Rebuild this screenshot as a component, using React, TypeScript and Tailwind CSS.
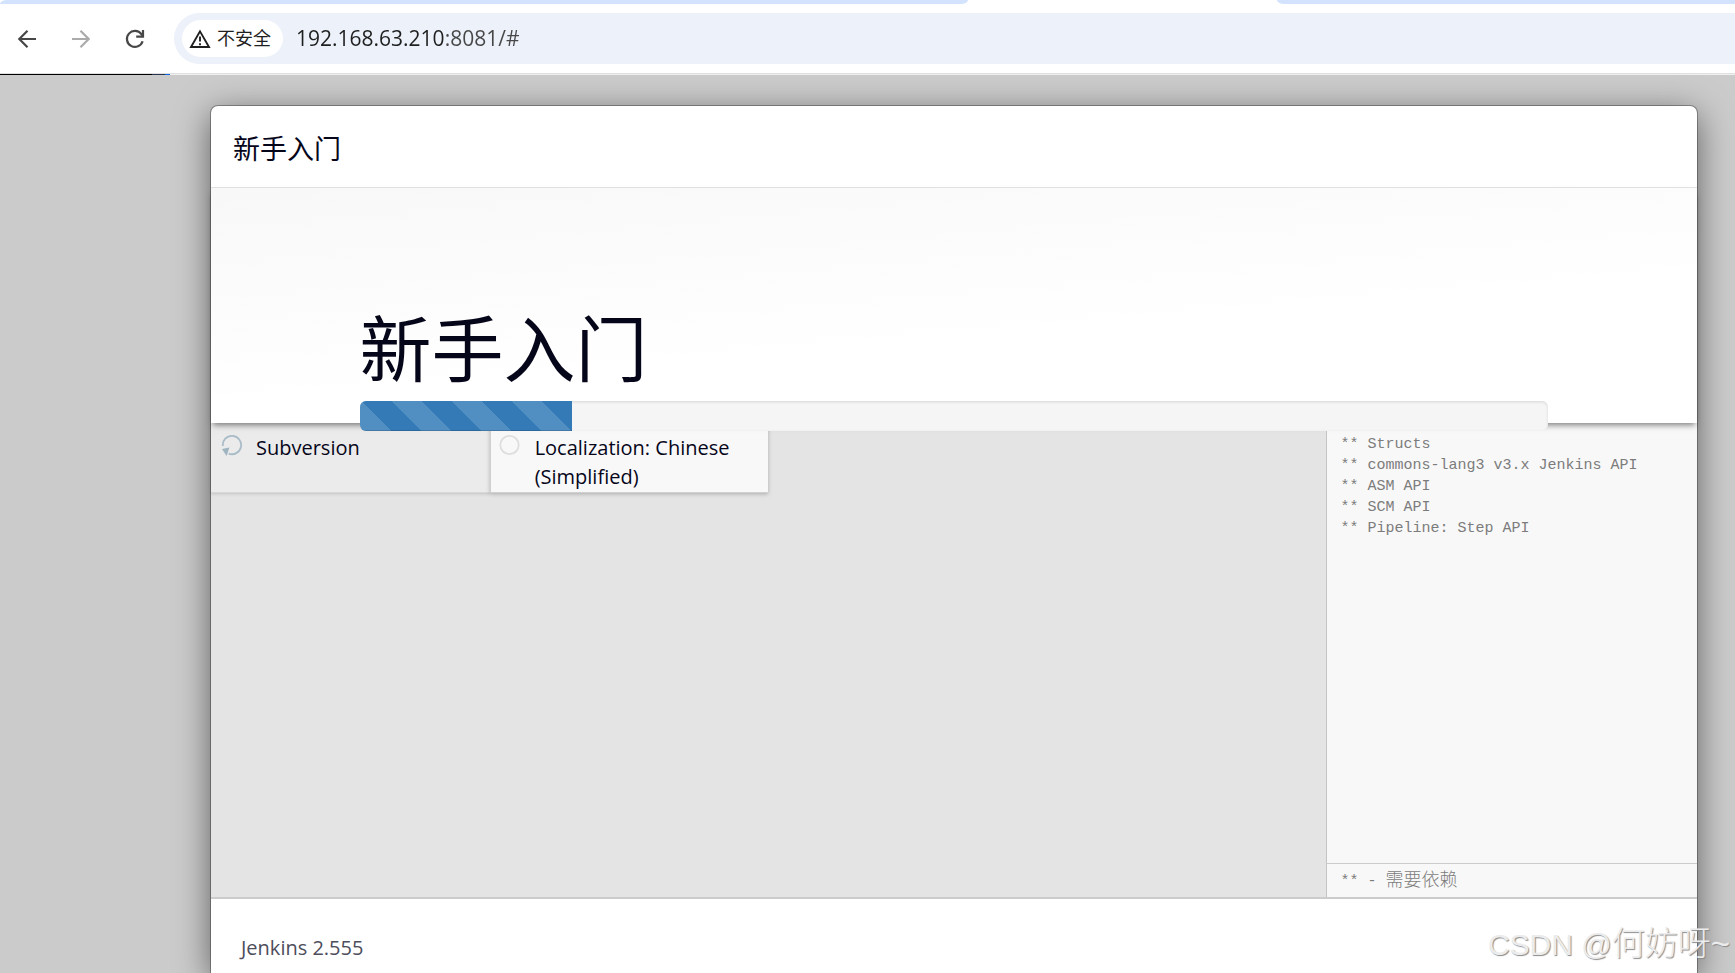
import React from "react";

const UI_FONT = "font-['Open_Sans','Noto_Sans_CJK_SC',sans-serif]";

const PLUGINS = [
  { name: "Subversion", status: "installing" },
  { name: "Localization: Chinese (Simplified)", status: "pending" },
];

const DEPENDENCIES = ["Structs", "commons-lang3 v3.x Jenkins API", "ASM API", "SCM API", "Pipeline: Step API"];

const PROGRESS = 17.9;

function BackIcon() {
  return (
    <svg viewBox="0 0 20 20" className="h-5 w-5" fill="none" stroke="currentColor" strokeWidth="2.2">
      <path d="M19 10H2.5M10.5 1.8 2.3 10l8.2 8.2" />
    </svg>
  );
}

function ForwardIcon() {
  return (
    <svg viewBox="0 0 20 20" className="h-5 w-5" fill="none" stroke="currentColor" strokeWidth="2.2">
      <path d="M1 10h16.5M9.5 1.8l8.2 8.2-8.2 8.2" />
    </svg>
  );
}

function ReloadIcon() {
  return (
    <svg viewBox="0 0 20 20" className="h-5 w-5" fill="none" stroke="currentColor" strokeWidth="2.2">
      <path d="M17.6 12.2A8 8 0 1 1 16.4 5.2L18 7" />
      <path d="M18 1v6.6h-6.8" />
    </svg>
  );
}

function WarningIcon() {
  return (
    <svg viewBox="0 0 22 20" className="h-5 w-[22px]" fill="none" stroke="currentColor" strokeWidth="1.9">
      <path d="M11 2.4 20 18H2z" />
      <path d="M11 7.6v5M11 14.2v2" />
    </svg>
  );
}

function StatusIcon({ status }: { status: string }) {
  if (status === "installing") {
    return (
      <svg viewBox="0 0 22 22" className="mt-px h-[22px] w-[22px] shrink-0" fill="none">
        <path d="M1.8 12A9.2 9.2 0 1 1 7.6 19.6" stroke="#a9bcc7" strokeWidth="1.8" />
        <path d="M1 15 8.4 13.6 5.6 22z" fill="#9fb4c1" />
      </svg>
    );
  }
  return (
    <svg viewBox="0 0 22 22" className="mt-px h-[22px] w-[22px] shrink-0" fill="none">
      <circle cx="10.5" cy="11" r="9.2" stroke="#dedede" strokeWidth="1.8" />
    </svg>
  );
}

function BrowserBar() {
  return (
    <header className="bg-white">
      <div className="flex h-1">
        <div className="flex-1 rounded-tl-[7px_4px] rounded-br-[7px_4px] bg-[#d3e3fd]" />
        <div className="w-[309px]" />
        <div className="w-[458px] rounded-bl-[7px_4px] bg-[#d3e3fd]" />
      </div>

      <div className="flex items-center pt-[9px] pb-[9px] pl-[17px]">
        <nav className="flex w-[157px] items-center gap-[34px] text-[#474747]">
          <button type="button" aria-label="后退">
            <BackIcon />
          </button>
          <button type="button" aria-label="前进" className="text-[#ababab]" disabled>
            <ForwardIcon />
          </button>
          <button type="button" aria-label="重新加载">
            <ReloadIcon />
          </button>
        </nav>
        <div className="flex h-[51px] flex-1 items-center rounded-l-full bg-[#ecf1fa] pl-2">
          <button
            type="button"
            className="flex h-[37px] w-[101px] items-center gap-[6px] rounded-full bg-white pl-[7px] text-[18px] whitespace-nowrap text-[#1f1f1f]"
          >
            <WarningIcon />
            不安全
          </button>
          <input
            type="text"
            aria-label="地址"
            defaultValue="192.168.63.210:8081/#"
            className="ml-[13px] flex-1 bg-[linear-gradient(to_right,#1f1f1f_148px,#474747_148px)] bg-clip-text text-[21px] text-transparent outline-none"
          />
        </div>
      </div>

      <div className="h-px bg-[#e0e0e0]" />
      <div className="flex h-px bg-[#f0f0f0]">
        <div className="w-[152px] bg-black" />
        <div className="w-[13px] bg-[#27354d]" />
        <div className="w-[5px] bg-[#1266e0]" />
      </div>
    </header>
  );
}

function PluginList() {
  return (
    <ul className="grid flex-1 grid-cols-4 content-start bg-[#e4e4e4]">
      {PLUGINS.map((plugin) => (
        <li
          key={plugin.name}
          className={
            plugin.status === "installing"
              ? "flex h-[70px] gap-[13px] border-b border-[#d8d8d8] bg-[#ebebeb] pt-[10px] pl-[10px] text-[20px] leading-[29px] shadow-[0_1px_3px_rgba(0,0,0,0.15)]"
              : "flex h-[70px] gap-[14px] border-b border-l border-[#d0d0d0] bg-[#f8f8f8] pt-[10px] pl-[8px] text-[20px] leading-[29px] shadow-[0_1px_4px_rgba(0,0,0,0.25)]"
          }
        >
          <StatusIcon status={plugin.status} />
          <span>{plugin.name}</span>
        </li>
      ))}
    </ul>
  );
}

function InstallConsole() {
  return (
    <aside className="flex w-1/4 flex-col border-l border-[#c4c4c4] bg-[#f8f8f8] font-['Liberation_Mono','Noto_Sans_CJK_SC',monospace] text-[15px] leading-[21px] text-[#7c7c7c]">
      <div className="flex-1 pt-[11px] pl-[14px]">
        {DEPENDENCIES.map((name) => (
          <div key={name}>** {name}</div>
        ))}
      </div>
      <div className="flex h-[34px] items-center border-t border-[#cccccc] pt-[2px] pl-[14px] whitespace-pre">
        ** - <span className="text-[18px] font-light">需要依赖</span>
      </div>
    </aside>
  );
}

export default function App() {
  return (
    <div className={`relative flex h-screen flex-col overflow-hidden bg-[#cbcbcb] text-[#06061a] ${UI_FONT}`}>
      <BrowserBar />

      <main className="flex flex-1 pt-[31px] pr-[38px] pl-[211px]">
        <section className="flex flex-1 flex-col rounded-t-[7px] bg-white shadow-[0_0_0_1px_rgba(0,0,0,0.3),0_8px_34px_rgba(0,0,0,0.55)]">
          <div className="flex h-[82px] items-center border-b border-[#e2e2e2] pt-[5px] pl-[22px]">
            <h4 className="text-[27px] leading-9">新手入门</h4>
          </div>

          <div className="relative z-10 bg-[linear-gradient(175deg,#f8f8f8,#ffffff_60%)] px-[10%] pt-[120px] shadow-[0_4px_6px_-2px_rgba(0,0,0,0.5)]">
            <h1 className="text-[72px] leading-[80px]">新手入门</h1>
            <div
              role="progressbar"
              aria-label="安装进度"
              aria-valuenow={PROGRESS}
              aria-valuemin={0}
              aria-valuemax={100}
              className="mt-[13px] -mb-2 h-[30px] overflow-hidden rounded-md bg-[#f5f5f5] shadow-[inset_0_1px_3px_rgba(0,0,0,0.12)]"
            >
              <div
                className="h-full bg-[#337ab7] bg-[linear-gradient(45deg,rgba(255,255,255,0.15)_25%,transparent_25%,transparent_50%,rgba(255,255,255,0.15)_50%,rgba(255,255,255,0.15)_75%,transparent_75%)] bg-[length:60px_60px] bg-[position:32px_0] shadow-[inset_0_-1px_0_rgba(0,0,0,0.15)]"
                style={{ width: `${PROGRESS}%` }}
              />
            </div>
          </div>

          <div className="flex h-[476px] border-b-2 border-[#cccccc]">
            <PluginList />
            <InstallConsole />
          </div>

          <footer className="pt-[34px] pl-[30px] text-[20px] leading-[29px] text-[#4d4d5c]">Jenkins 2.555</footer>
        </section>
      </main>

      <div className="pointer-events-none absolute right-[5px] bottom-[6px] flex items-baseline font-['Liberation_Sans','Noto_Sans_CJK_SC',sans-serif] text-[30px] leading-[44px] font-light whitespace-pre text-[#ececec] [text-shadow:1px_1px_1px_#8a8a8a]">
        CSDN @<span className="text-[33px]">何妨呀~</span>
      </div>
    </div>
  );
}
